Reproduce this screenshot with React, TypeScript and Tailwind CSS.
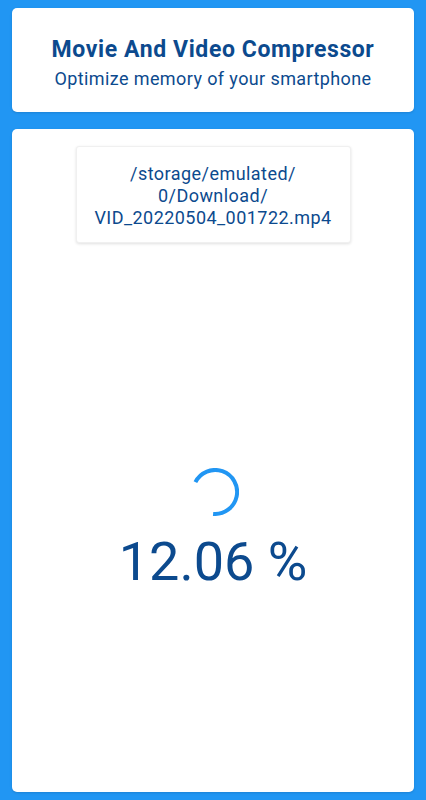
export default function App() {
  return (
    <div
      className="w-full h-[800px] bg-[#2196f3] px-3 pt-2 pb-2 flex flex-col gap-[17px]"
      style={{ fontFamily: "Roboto, 'Noto Sans', sans-serif" }}
    >
      {/* Header card */}
      <div className="h-[104px] shrink-0 bg-white rounded-[5px] shadow-sm flex flex-col items-center pt-[27px]">
        <h1 className="text-[23px] leading-[29px] font-bold tracking-[0.6px] text-[#0c4a8e]">Movie And Video Compressor</h1>
        <p className="mt-[3px] text-[18px] leading-[24px] tracking-[0.4px] text-[#0c4a8e]">Optimize memory of your smartphone</p>
      </div>

      {/* Progress card */}
      <div className="flex-1 bg-white rounded-[5px] shadow-sm flex flex-col items-center pt-[17px]">
        <div className="w-[275px] bg-white border border-[#f0f0f0] rounded-[3px] shadow-[0_1px_3px_rgba(0,0,0,0.12)] pt-4 pb-[13px] flex flex-col items-center text-[18px] leading-[22px] tracking-[0.45px] text-[#0c4a8e]">
          <span>/storage/emulated/</span>
          <span>0/Download/</span>
          <span>VID_20220504_001722.mp4</span>
        </div>

        <svg className="mt-[225px] ml-[4px]" width="48" height="48" viewBox="0 0 48 48">
          <path
            d="M 4.4 14.2 A 22 22 0 1 1 22.1 45.9"
            fill="none"
            stroke="#2196f3"
            strokeWidth="4"
            strokeLinecap="butt"
          />
        </svg>

        <div className="mt-[14px] text-[54px] leading-[64px] text-[#0c4a8e]">12.06 %</div>
      </div>
    </div>
  );
}
